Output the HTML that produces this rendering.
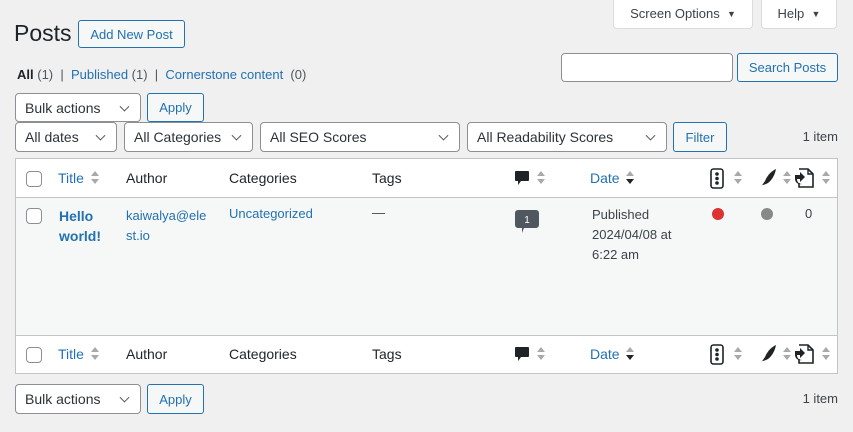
<!DOCTYPE html>
<html><head><meta charset="utf-8"><style>
*{box-sizing:border-box;margin:0;padding:0}
body{width:853px;height:432px;background:#f0f0f1;font-family:"Liberation Sans",Arial,sans-serif;font-size:13px;color:#1d2327;position:relative;overflow:hidden}
.a{position:absolute;white-space:nowrap}
.btn{position:absolute;border:1px solid #2271b1;color:#2271b1;background:#f6f7f7;border-radius:3px;font-size:13px;display:flex;align-items:center;justify-content:center}
.sel{position:absolute;border:1px solid #8c8f94;background:#fff;border-radius:4px;font-size:14px;padding-left:9px;display:flex;align-items:center;color:#2c3338}
.sel:after{content:"";position:absolute;right:12px;top:50%;width:6px;height:6px;border-right:1.3px solid #50575e;border-bottom:1.3px solid #50575e;transform:translateY(-70%) rotate(45deg)}
.tb{position:absolute;background:#fff;border:1px solid #dcdcde;border-top:none;border-radius:0 0 4px 4px;font-size:13px;color:#3c434a;display:flex;align-items:center;justify-content:center}
.cb{position:absolute;width:16px;height:16px;border:1px solid #8c8f94;border-radius:4px;background:#fff}
.lnk{color:#2271b1}
.th{position:absolute;font-size:14px}
.sort{position:absolute;width:8px;height:14px}
.sort:before,.sort:after{content:"";position:absolute;left:0;border-left:4px solid transparent;border-right:4px solid transparent}
.sort:before{top:0;border-bottom:5px solid #a7aaad}
.sort:after{top:8px;border-top:5px solid #a7aaad}
.sort.d:after{border-top-color:#1d2327}
</style></head><body>
<div class="tb" style="left:613px;top:-1px;width:140px;height:30px">Screen Options&nbsp;&nbsp;<span style="font-size:9px">▼</span></div>
<div class="tb" style="left:761px;top:-1px;width:76px;height:30px">Help&nbsp;&nbsp;<span style="font-size:9px">▼</span></div>

<div class="a" style="left:14px;top:20px;font-size:23px;color:#1d2327">Posts</div>
<div class="btn" style="left:78px;top:20px;width:107px;height:28px">Add New Post</div>

<div class="a" style="left:17px;top:67px;font-size:13px;color:#50575e"><b style="color:#1d2327">All</b> (1) &nbsp;|&nbsp; <span class="lnk">Published</span> (1) &nbsp;|&nbsp; <span class="lnk">Cornerstone content</span> &nbsp;(0)</div>

<div style="position:absolute;left:561px;top:53px;width:172px;height:29px;background:#fff;border:1px solid #8c8f94;border-radius:4px"></div>
<div class="btn" style="left:737px;top:53px;width:101px;height:29px">Search Posts</div>

<div class="sel" style="left:15px;top:93px;width:126px;height:29px">Bulk actions</div>
<div class="btn" style="left:147px;top:93px;width:57px;height:29px">Apply</div>

<div class="sel" style="left:15px;top:122px;width:102px;height:30px">All dates</div>
<div class="sel" style="left:124px;top:122px;width:129px;height:30px">All Categories</div>
<div class="sel" style="left:260px;top:122px;width:200px;height:30px">All SEO Scores</div>
<div class="sel" style="left:467px;top:122px;width:200px;height:30px">All Readability Scores</div>
<div class="btn" style="left:673px;top:122px;width:54px;height:30px">Filter</div>
<div class="a" style="right:15px;top:129px;color:#3c434a">1 item</div>

<div style="position:absolute;left:15px;top:158px;width:823px;height:216px;border:1px solid #c3c4c7;background:#fff">
 <div style="position:absolute;left:0;top:38px;width:821px;height:139px;background:#f6f7f7;border-top:1px solid #c3c4c7;border-bottom:1px solid #c3c4c7"></div>
</div>

<!-- header -->
<div class="cb" style="left:26px;top:171px"></div>
<div class="th lnk" style="left:58px;top:170px">Title</div><div class="sort" style="left:91px;top:171px"></div>
<div class="th" style="left:126px;top:170px">Author</div>
<div class="th" style="left:229px;top:170px">Categories</div>
<div class="th" style="left:372px;top:170px">Tags</div>
<svg class="a" style="left:515px;top:171px" width="14" height="15" viewBox="0 0 14 15"><path d="M1 0h12a1 1 0 0 1 1 1v8a1 1 0 0 1-1 1H6l-3 4v-4H1a1 1 0 0 1-1-1V1a1 1 0 0 1 1-1z" fill="#1d2327"/></svg>
<div class="sort" style="left:537px;top:171px"></div>
<div class="th lnk" style="left:590px;top:170px">Date</div><div class="sort d" style="left:626px;top:171px"></div>
<svg class="a" style="left:710px;top:168px" width="14" height="21" viewBox="0 0 14 21"><rect x="1" y="1" width="12" height="19" rx="2.5" fill="none" stroke="#1d2327" stroke-width="1.6"/><circle cx="7" cy="6" r="1.8" fill="#1d2327"/><circle cx="7" cy="10.5" r="1.8" fill="#1d2327"/><circle cx="7" cy="15" r="1.8" fill="#1d2327"/></svg>
<div class="sort" style="left:734px;top:171px"></div>
<svg class="a" style="left:759px;top:168px" width="18" height="21" viewBox="0 0 18 21"><path d="M1 20L6 13C9 6 13 3 17 1 16 6 14 11 9 15 7 16 5 17 3 17z" fill="#1d2327"/></svg>
<div class="sort" style="left:783px;top:171px"></div>
<svg class="a" style="left:794px;top:167px" width="22" height="22" viewBox="0 0 22 22"><path d="M5 2h9l5 5v13H5v-4" fill="none" stroke="#1d2327" stroke-width="1.6"/><path d="M14 2v5h5" fill="none" stroke="#1d2327" stroke-width="1.4"/><path d="M1 8h5V5l5 5-5 5v-3H3c0 3 2 5 5 5-4 1-7-2-7-5z" fill="#1d2327"/></svg>
<div class="sort" style="left:822px;top:171px"></div>

<!-- row -->
<div class="cb" style="left:26px;top:208px"></div>
<div class="a lnk" style="left:59px;top:206px;font-size:14px;font-weight:bold;line-height:20px">Hello<br>world!</div>
<div class="a lnk" style="left:126px;top:206px;line-height:20px">kaiwalya@ele<br>st.io</div>
<div class="a lnk" style="left:229px;top:206px">Uncategorized</div>
<div class="a" style="left:372px;top:205px;color:#3c434a">—</div>
<svg class="a" style="left:515px;top:210px" width="24" height="24" viewBox="0 0 24 24"><path d="M3 0h18a3 3 0 0 1 3 3v12a3 3 0 0 1-3 3H9l-2 5v-5H3a3 3 0 0 1-3-3V3a3 3 0 0 1 3-3z" fill="#50575e"/><text x="12" y="13" font-size="10" fill="#fff" text-anchor="middle" font-family="Liberation Sans">1</text></svg>
<div class="a" style="left:592px;top:205px;line-height:20px;color:#3c434a">Published<br>2024/04/08 at<br>6:22 am</div>
<div class="a" style="left:712px;top:208px;width:12px;height:12px;border-radius:50%;background:#dc3232"></div>
<div class="a" style="left:761px;top:208px;width:12px;height:12px;border-radius:50%;background:#888"></div>
<div class="a" style="left:805px;top:206px;color:#3c434a">0</div>

<!-- footer -->
<div class="cb" style="left:26px;top:347px"></div>
<div class="th lnk" style="left:58px;top:346px">Title</div><div class="sort" style="left:91px;top:347px"></div>
<div class="th" style="left:126px;top:346px">Author</div>
<div class="th" style="left:229px;top:346px">Categories</div>
<div class="th" style="left:372px;top:346px">Tags</div>
<svg class="a" style="left:515px;top:347px" width="14" height="15" viewBox="0 0 14 15"><path d="M1 0h12a1 1 0 0 1 1 1v8a1 1 0 0 1-1 1H6l-3 4v-4H1a1 1 0 0 1-1-1V1a1 1 0 0 1 1-1z" fill="#1d2327"/></svg>
<div class="sort" style="left:537px;top:347px"></div>
<div class="th lnk" style="left:590px;top:346px">Date</div><div class="sort d" style="left:626px;top:347px"></div>
<svg class="a" style="left:710px;top:344px" width="14" height="21" viewBox="0 0 14 21"><rect x="1" y="1" width="12" height="19" rx="2.5" fill="none" stroke="#1d2327" stroke-width="1.6"/><circle cx="7" cy="6" r="1.8" fill="#1d2327"/><circle cx="7" cy="10.5" r="1.8" fill="#1d2327"/><circle cx="7" cy="15" r="1.8" fill="#1d2327"/></svg>
<div class="sort" style="left:734px;top:347px"></div>
<svg class="a" style="left:759px;top:344px" width="18" height="21" viewBox="0 0 18 21"><path d="M1 20L6 13C9 6 13 3 17 1 16 6 14 11 9 15 7 16 5 17 3 17z" fill="#1d2327"/></svg>
<div class="sort" style="left:783px;top:347px"></div>
<svg class="a" style="left:794px;top:343px" width="22" height="22" viewBox="0 0 22 22"><path d="M5 2h9l5 5v13H5v-4" fill="none" stroke="#1d2327" stroke-width="1.6"/><path d="M14 2v5h5" fill="none" stroke="#1d2327" stroke-width="1.4"/><path d="M1 8h5V5l5 5-5 5v-3H3c0 3 2 5 5 5-4 1-7-2-7-5z" fill="#1d2327"/></svg>
<div class="sort" style="left:822px;top:347px"></div>

<div class="sel" style="left:15px;top:384px;width:126px;height:30px">Bulk actions</div>
<div class="btn" style="left:147px;top:384px;width:57px;height:30px">Apply</div>
<div class="a" style="right:15px;top:391px;color:#3c434a">1 item</div>
</body></html>
